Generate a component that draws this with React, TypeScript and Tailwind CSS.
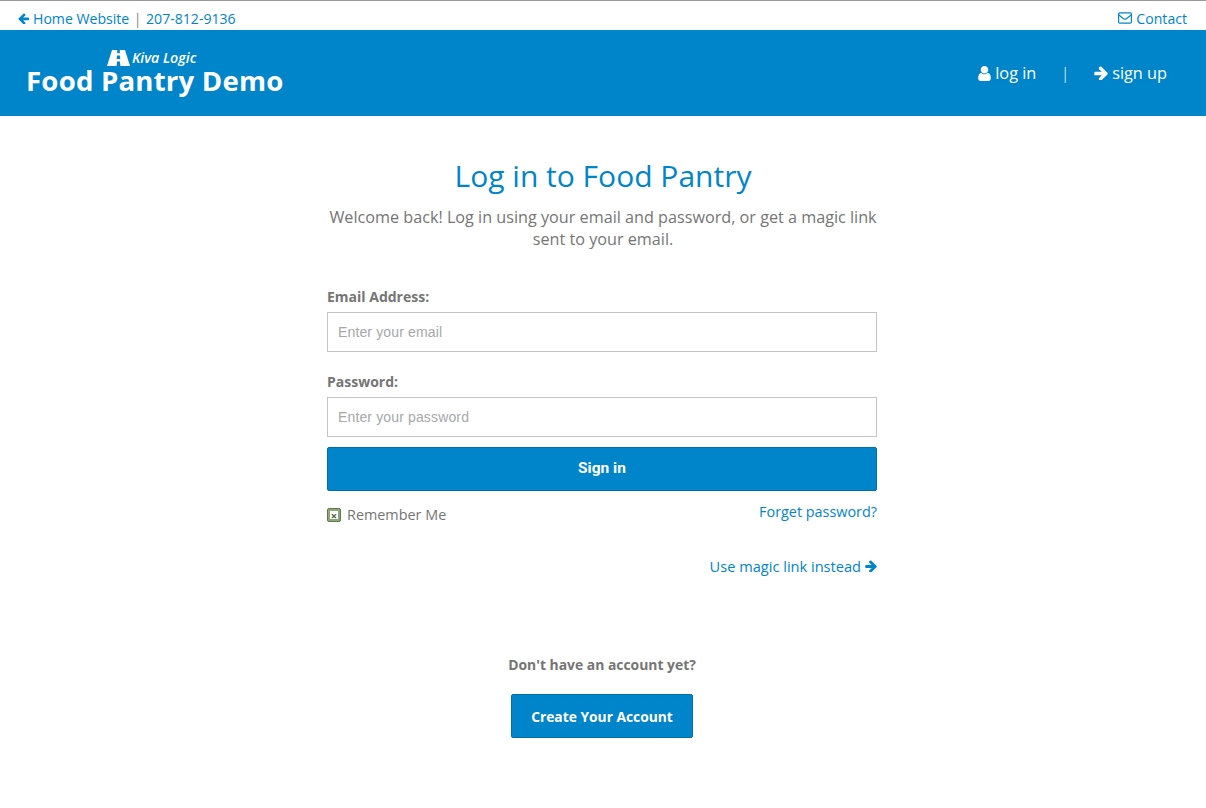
import React from 'react';

const sans = 'font-["Open_Sans",sans-serif]';

// Font Awesome 4 glyph shapes, the ones in react-icons are thinner
const ARROW_RIGHT =
  'M1600 960q0 54-37 91l-651 651q-39 37-91 37-51 0-90-37l-75-75q-38-38-38-91t38-91l293-293h-704q-52 0-84.500-37.500t-32.500-90.500v-128q0-53 32.500-90.500t84.500-37.500h704l-293-294q-38-36-38-90t38-90l75-75q38-38 90-38 53 0 91 38l651 651q37 35 37 90z';
const ARROW_LEFT =
  'M1664 896v128q0 53-32.500 90.500t-84.500 37.500h-704l293 294q38 36 38 90t-38 90l-75 75q-38 38-90 38-53 0-91-38l-651-651q-37-37-37-91 0-53 37-90l651-650q38-38 91-38 52 0 90 38l75 74q38 38 38 91t-38 91l-293 293h704q52 0 84.500 37.500t32.500 90.500z';
const USER =
  'M1536 1399q0 109-62.500 187t-150.500 78h-854q-88 0-150.500-78t-62.500-187q0-85 8.500-160.500t31.500-152 58.500-131 94-89 134.500-34.500q131 128 313 128t313-128q76 0 134.500 34.500t94 89 58.500 131 31.500 152 8.500 160.500zm-256-887q0 159-112.500 271.500t-271.500 112.500-271.500-112.500-112.500-271.500 112.500-271.500 271.500-112.500 271.500 112.500 112.500 271.500z';

function Glyph({ d, className, box }: { d: string; className: string; box: string }) {
  return (
    <svg viewBox={box} className={className} fill="currentColor">
      <path d={d} />
    </svg>
  );
}

function EnvelopeIcon() {
  return (
    <svg viewBox="0 0 14 12" className="mr-[4px] h-3 w-3.5" fill="none" stroke="currentColor" strokeWidth="1.200">
      <rect x="0.600" y="0.900" width="12.800" height="10.200" rx="1.200" />
      <path d="M0.900 3l4.700 3.700q1.400 1 2.800 0L13.100 3" />
    </svg>
  );
}

// Kiva Logic road mark
function KivaMark() {
  return (
    <svg width="23" height="16" viewBox="0 0 23 16" fill="currentColor">
      <path d="M5 0h5.200v3.200h2.600V0H18l5 16h-9.600l-.5-4.600h-2.800L9.600 16H0zM10 5.500l-.3 3.500h3.600L13 5.500z" />
    </svg>
  );
}

function Field({ label, placeholder, type }: { label: string; placeholder: string; type: string }) {
  return (
    <div>
      <label className="block text-sm leading-[20px] font-bold text-[#757575]">{label}</label>
      <input
        type={type}
        placeholder={placeholder}
        className='mt-[5px] block h-10 w-full border border-[#c4c4c4] bg-white px-2.5 font-["Liberation_Sans",sans-serif] text-sm tracking-[0.14px] text-[#333] outline-none placeholder:text-[#a6a8aa]'
      />
    </div>
  );
}

export default function App() {
  return (
    <div className={`${sans} min-h-[808px] bg-white`}>
      {/* Top bar */}
      <div className="flex h-[30px] items-center justify-between border-t border-[#999] pt-[6px] pr-[19px] pl-[18px] text-[14.1px] text-[#0085ca]">
        <div className="flex items-center">
          <Glyph d={ARROW_LEFT} box="128 128 1536 1536" className="mr-[4px] h-[11px] w-[11px]" />
          <a>Home Website</a>
          <span className="mx-[4.5px] text-[#888]">|</span>
          <a>207-812-9136</a>
        </div>
        <div className="flex items-center">
          <EnvelopeIcon />
          <a>Contact</a>
        </div>
      </div>

      {/* Header */}
      <header className="flex h-[86px] items-center justify-between bg-[#0085ca] pr-[39px] pl-[26px] text-white">
        <div className="flex flex-col pb-[4px]">
          <div className="ml-[81px] flex h-[18px] items-center">
            <KivaMark />
            <span className="ml-[2px] text-[14.2px] leading-[14px] font-semibold italic">Kiva Logic</span>
          </div>
          <div className="text-[27.6px] leading-[26px] font-bold tracking-[0.2px]">Food Pantry Demo</div>
        </div>
        <nav className="flex items-center text-[16.3px]">
          <Glyph d={USER} box="256 128 1280 1536" className="mr-[4px] h-[15px] w-[13px]" />
          <a>log in</a>
          <span className="mx-[24.5px] font-light">|</span>
          <Glyph d={ARROW_RIGHT} box="128 128 1472 1536" className="mr-[4px] h-[14px] w-[14px]" />
          <a>sign up</a>
        </nav>
      </header>

      {/* Login form */}
      <main className="ml-[327px] w-[550px] pt-[40px]">
        <h1 className="pl-[2px] text-center text-[30px] leading-[40px] text-[#0085ca]">Log in to Food Pantry</h1>
        <p className="mt-[10px] pl-[2px] text-center text-[16.2px] leading-[22px] text-[#757575]">
          Welcome back! Log in using your email and password, or get a magic link sent to your email.
        </p>

        <div className="mt-[37px] flex flex-col gap-[20px]">
          <Field label="Email Address:" placeholder="Enter your email" type="email" />
          <Field label="Password:" placeholder="Enter your password" type="password" />
        </div>

        <button className='mt-[10px] h-11 w-full rounded-[2px] border border-[#0070aa] bg-[#0085ca] font-["Roboto",sans-serif] text-[15.5px] font-bold text-white'>
          Sign in
        </button>

        <div className="mt-[10px] flex items-start justify-between text-[14.4px] leading-[20px]">
          <label className="mt-[4px] flex items-center text-[#757575]">
            <span className="mr-[6px] flex h-[14px] w-[14px] items-center justify-center rounded-[2px] border border-[#5f7a4e] bg-[#8fa67c]">
              <span className="flex h-2 w-2 items-center justify-center bg-white text-[11px] leading-none font-bold text-[#3f5a30]">×</span>
            </span>
            Remember Me
          </label>
          <a className="mt-[1px] text-[#0085ca]">Forget password?</a>
        </div>

        <div className="mt-[31px] flex items-center justify-end text-[14.6px] leading-[20px] text-[#0085ca]">
          <a>Use magic link instead</a>
          <Glyph d={ARROW_RIGHT} box="128 128 1472 1536" className="ml-[4px] h-3 w-3" />
        </div>

        <div className="mt-[79px] text-center">
          <p className="text-[13.9px] leading-[20px] font-bold text-[#757575]">Don't have an account yet?</p>
          <button className="mt-[19px] h-11 w-[182px] rounded-[2px] border border-[#0070aa] bg-[#0085ca] pt-[2px] text-[13.8px] font-bold text-white">
            Create Your Account
          </button>
        </div>
      </main>
    </div>
  );
}
